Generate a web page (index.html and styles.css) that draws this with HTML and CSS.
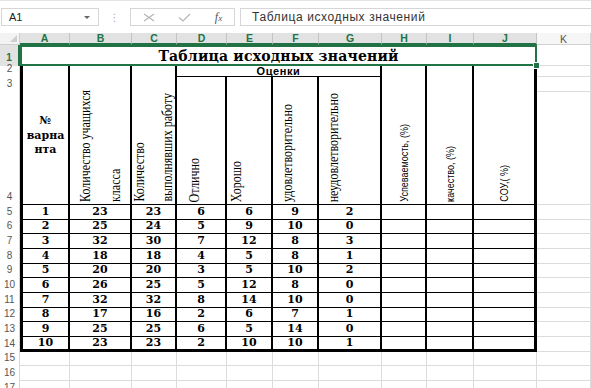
FILE: index.html
```html
<!DOCTYPE html>
<html lang="ru">
<head>
<meta charset="utf-8">
<link rel="stylesheet" href="styles.css">
</head>
<body>
<div class="fbar">
  <div class="namebox"><span>A1</span><span class="dd"></span></div>
  <div class="dots">⋮</div>
  <div class="btns">
    <svg class="ico" width="12" height="9" viewBox="0 0 12 9"><path d="M1 1 L11 8 M11 1 L1 8" stroke="#b4b4b4" stroke-width="1.1" fill="none"/></svg>
    <svg class="ico" width="13" height="9" viewBox="0 0 13 9"><path d="M1 4.5 L5 8 L12 1" stroke="#b4b4b4" stroke-width="1.2" fill="none"/></svg>
    <span class="fx">f<small>x</small></span>
  </div>
  <div class="formula">Таблица исходных значений</div>
</div>

<div class="sheet">
  <!-- column headers -->
  <div class="corner"><svg width="7" height="7" viewBox="0 0 7 7"><path d="M7 0 L7 7 L0 7 Z" fill="#cfcfcf"/></svg></div>
  <div class="ch sel">A</div><div class="ch sel">B</div><div class="ch sel">C</div><div class="ch sel">D</div><div class="ch sel">E</div>
  <div class="ch sel">F</div><div class="ch sel">G</div><div class="ch sel">H</div><div class="ch sel">I</div><div class="ch sel">J</div>
  <div class="ch">K</div>

  <!-- row 1 -->
  <div class="rh sel">1</div>
  <div class="title"><span class="title-text">Таблица исходных значений</span><span class="handle"></span></div>
  <div class="g"></div>

  <!-- row 2 -->
  <div class="rh">2</div>
  <div class="t first rs3 num-head">№<br>варна<br>нта</div>
  <div class="t rs3 rot"><span class="v serif lh26">Количество учащихся<br>класса</span></div>
  <div class="t rs3 rot"><span class="v serif lh25">Количество<br>выполнявших работу</span></div>
  <div class="t cs4 ocenki">Оценки</div>
  <div class="t rs3 rot"><span class="v sans">Успеваемость, (%)</span></div>
  <div class="t rs3 rot"><span class="v sans">качество, (%)</span></div>
  <div class="t last rs3 rot"><span class="v sans">СОУ,( %)</span></div>
  <div class="g"></div>

  <!-- row 3 -->
  <div class="rh">3</div>
  <div class="t rs2 rot left pd-d"><span class="v serif lh14">Отлично</span></div>
  <div class="t rs2 rot left pd-e"><span class="v serif lh14">Хорошо</span></div>
  <div class="t rs2 rot left pd-f"><span class="v serif lh14">удовлетворительно</span></div>
  <div class="t rs2 rot left pd-f"><span class="v serif lh14">неудовлетворительно</span></div>
  <div class="g"></div>

  <!-- row 4 -->
  <div class="rh">4</div>
  <div class="g"></div>

  <!-- data rows -->
  <div class="rh">5</div>
  <div class="t first d">1</div><div class="t d">23</div><div class="t d">23</div><div class="t d">6</div><div class="t d">6</div><div class="t d">9</div><div class="t d">2</div><div class="t d"></div><div class="t d"></div><div class="t last d"></div>
  <div class="g"></div>

  <div class="rh">6</div>
  <div class="t first d">2</div><div class="t d">25</div><div class="t d">24</div><div class="t d">5</div><div class="t d">9</div><div class="t d">10</div><div class="t d">0</div><div class="t d"></div><div class="t d"></div><div class="t last d"></div>
  <div class="g"></div>

  <div class="rh">7</div>
  <div class="t first d">3</div><div class="t d">32</div><div class="t d">30</div><div class="t d">7</div><div class="t d">12</div><div class="t d">8</div><div class="t d">3</div><div class="t d"></div><div class="t d"></div><div class="t last d"></div>
  <div class="g"></div>

  <div class="rh">8</div>
  <div class="t first d">4</div><div class="t d">18</div><div class="t d">18</div><div class="t d">4</div><div class="t d">5</div><div class="t d">8</div><div class="t d">1</div><div class="t d"></div><div class="t d"></div><div class="t last d"></div>
  <div class="g"></div>

  <div class="rh">9</div>
  <div class="t first d">5</div><div class="t d">20</div><div class="t d">20</div><div class="t d">3</div><div class="t d">5</div><div class="t d">10</div><div class="t d">2</div><div class="t d"></div><div class="t d"></div><div class="t last d"></div>
  <div class="g"></div>

  <div class="rh">10</div>
  <div class="t first d">6</div><div class="t d">26</div><div class="t d">25</div><div class="t d">5</div><div class="t d">12</div><div class="t d">8</div><div class="t d">0</div><div class="t d"></div><div class="t d"></div><div class="t last d"></div>
  <div class="g"></div>

  <div class="rh">11</div>
  <div class="t first d">7</div><div class="t d">32</div><div class="t d">32</div><div class="t d">8</div><div class="t d">14</div><div class="t d">10</div><div class="t d">0</div><div class="t d"></div><div class="t d"></div><div class="t last d"></div>
  <div class="g"></div>

  <div class="rh">12</div>
  <div class="t first d">8</div><div class="t d">17</div><div class="t d">16</div><div class="t d">2</div><div class="t d">6</div><div class="t d">7</div><div class="t d">1</div><div class="t d"></div><div class="t d"></div><div class="t last d"></div>
  <div class="g"></div>

  <div class="rh">13</div>
  <div class="t first d">9</div><div class="t d">25</div><div class="t d">25</div><div class="t d">6</div><div class="t d">5</div><div class="t d">14</div><div class="t d">0</div><div class="t d"></div><div class="t d"></div><div class="t last d"></div>
  <div class="g"></div>

  <div class="rh">14</div>
  <div class="t first d bot">10</div><div class="t d bot">23</div><div class="t d bot">23</div><div class="t d bot">2</div><div class="t d bot">10</div><div class="t d bot">10</div><div class="t d bot">1</div><div class="t d bot"></div><div class="t d bot"></div><div class="t last d bot"></div>
  <div class="g"></div>

  <!-- empty rows -->
  <div class="rh">15</div>
  <div class="g"></div><div class="g"></div><div class="g"></div><div class="g"></div><div class="g"></div><div class="g"></div><div class="g"></div><div class="g"></div><div class="g"></div><div class="g"></div><div class="g"></div>
  <div class="rh">16</div>
  <div class="g"></div><div class="g"></div><div class="g"></div><div class="g"></div><div class="g"></div><div class="g"></div><div class="g"></div><div class="g"></div><div class="g"></div><div class="g"></div><div class="g"></div>
  <div class="rh">17</div>
  <div class="g"></div><div class="g"></div><div class="g"></div><div class="g"></div><div class="g"></div><div class="g"></div><div class="g"></div><div class="g"></div><div class="g"></div><div class="g"></div><div class="g"></div>
</div>
</body>
</html>
```
FILE: styles.css
```css
* { box-sizing: border-box; }
html, body { margin: 0; padding: 0; }
body {
  width: 591px;
  height: 388px;
  overflow: hidden;
  background: #fff;
  font-family: "Liberation Sans", Arial, sans-serif;
}

/* formula bar */
.fbar {
  display: flex;
  align-items: flex-start;
  height: 33px;
  padding-top: 7px;
  border-top: 1px solid #e4e4e4;
}
.namebox {
  margin-left: 1px;
  width: 98px;
  height: 18px;
  border: 1px solid #d6d6d6;
  display: flex;
  align-items: center;
  justify-content: space-between;
  padding: 0 8px 0 7px;
  font-size: 11px;
  color: #222;
}
.dd {
  width: 0;
  height: 0;
  border-left: 3px solid transparent;
  border-right: 3px solid transparent;
  border-top: 3px solid #666;
}
.dots {
  width: 31px;
  height: 18px;
  display: flex;
  align-items: center;
  justify-content: center;
  color: #a8a8a8;
  font-family: "DejaVu Sans", sans-serif;
  font-size: 10px;
}
.btns {
  width: 105px;
  height: 18px;
  border: 1px solid #d6d6d6;
  display: flex;
  align-items: center;
  justify-content: space-around;
}
.ico { display: block; }
.fx {
  font-family: "Liberation Serif", serif;
  font-style: italic;
  font-size: 12px;
  color: #555;
  line-height: 1;
}
.fx small { font-size: 9px; }
.formula {
  flex: 1;
  margin-left: 5px;
  margin-right: -4px;
  height: 18px;
  border: 1px solid #d6d6d6;
  padding-left: 11px;
  font-size: 12px;
  letter-spacing: 0.6px;
  line-height: 16px;
  color: #333;
}

/* sheet grid */
.sheet {
  display: grid;
  grid-template-columns: 20px 50px 62px 45px 50px 46px 46px 63px 45px 47px 63px 54px;
  grid-template-rows: 12px 21px 11px 15px 113px repeat(13, 14.667px);
}
.corner {
  background: #f3f3f3;
  border-right: 1px solid #cfcfcf;
  border-bottom: 1px solid #cfcfcf;
  display: flex;
  align-items: flex-end;
  justify-content: flex-end;
  padding: 0 2px 2px 0;
}
.ch {
  background: #f6f6f6;
  border-right: 1px solid #d6d6d6;
  border-bottom: 1px solid #d0d0d0;
  display: flex;
  align-items: center;
  justify-content: center;
  font-size: 10.5px;
  color: #555;
}
.ch.sel {
  background: #e2e2e2;
  color: #217346;
  font-weight: bold;
  border-right-color: #c4c4c4;
  border-bottom: 2px solid #217346;
}
.rh {
  border-right: 1px solid #d6d6d6;
  display: flex;
  align-items: flex-end;
  justify-content: center;
  padding-bottom: 2px;
  font-size: 10px;
  line-height: 12px;
  color: #555;
}
.rh.sel {
  background: #e2e2e2;
  color: #217346;
  font-weight: bold;
  border-right: 2px solid #217346;
}

/* title row (selected merged cell) */
.title {
  grid-column: span 10;
  position: relative;
  border: 2px solid #217346;
  display: flex;
  align-items: center;
  justify-content: center;
  font-family: "DejaVu Serif", serif;
  font-weight: bold;
  font-size: 14px;
  letter-spacing: 0.2px;
  color: #000;
}
.handle {
  position: absolute;
  right: -5px;
  bottom: -5px;
  width: 7px;
  height: 7px;
  background: #217346;
  border: 1px solid #fff;
}

/* gridline cells */
.g {
  border-right: 1px solid #dcdcdc;
  border-bottom: 1px solid #dcdcdc;
}

/* table cells */
.t {
  border-right: 2px solid #000;
  border-bottom: 1px solid #000;
}
.t.first { border-left: 3px solid #000; }
.t.last { border-right: 3px solid #000; }
.t.bot { border-bottom: 3px solid #000; }
.rs3 { grid-row: span 3; }
.rs2 { grid-row: span 2; }
.cs4 { grid-column: span 4; }

.num-head {
  display: flex;
  align-items: center;
  justify-content: center;
  text-align: center;
  font-family: "DejaVu Serif", serif;
  font-weight: bold;
  font-size: 11px;
  line-height: 14.5px;
  padding-top: 2px;
}
.ocenki {
  display: flex;
  align-items: center;
  justify-content: center;
  font-weight: bold;
  font-size: 11px;
  letter-spacing: 0.6px;
  line-height: 10px;
}
.rot {
  display: flex;
  justify-content: center;
  align-items: flex-end;
  padding-bottom: 2px;
}
.rot.left { justify-content: flex-start; }
.pd-d { padding-left: 10px; }
.pd-e { padding-left: 2px; }
.pd-f { padding-left: 7px; }
.v {
  writing-mode: vertical-rl;
  transform: rotate(180deg);
  white-space: nowrap;
  color: #000;
}
.v.serif {
  font-family: "Liberation Serif", serif;
  font-size: 12px;
  transform: rotate(180deg) scale(1.15, 1);
}
.v.sans {
  font-family: "Liberation Sans", sans-serif;
  font-size: 9px;
  line-height: 12px;
  transform: rotate(180deg) scale(1.3, 1);
}
.lh26 { line-height: 26px; }
.lh25 { line-height: 25px; }
.lh14 { line-height: 14px; }

.d {
  display: flex;
  align-items: center;
  justify-content: center;
  font-family: "DejaVu Serif", serif;
  font-weight: bold;
  font-size: 11px;
  line-height: 12px;
}
```
